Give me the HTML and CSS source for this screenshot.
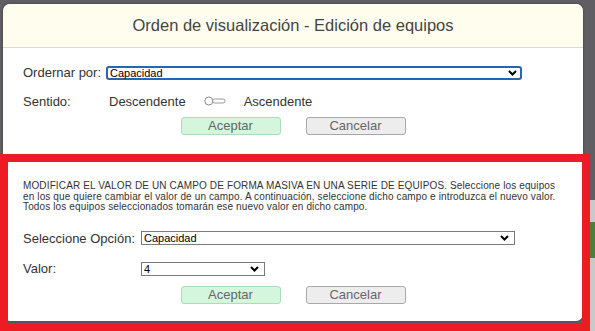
FILE: index.html
```html
<!DOCTYPE html>
<html lang="es">
<head>
<meta charset="utf-8">
<title>Orden de visualización - Edición de equipos</title>
<link rel="stylesheet" href="styles.css">
</head>
<body>
<div class="page-peek"><div class="peek-green"></div></div>
<div class="modal">
  <div class="modal-header">
    <h1 class="modal-title">Orden de visualización - Edición de equipos</h1>
  </div>
  <div class="section sort">
    <div class="row row-order">
      <span class="label label-order">Ordernar por:</span>
      <div class="select select-focused">
        <span class="select-text">Capacidad</span>
        <svg class="chevron" width="9" height="6" viewBox="0 0 9 6"><path d="M1 1 L4.5 4.5 L8 1" fill="none" stroke="#000" stroke-width="2"/></svg>
      </div>
    </div>
    <div class="row row-dir">
      <span class="label label-dir">Sentido:</span>
      <span class="opt">Descendente</span>
      <svg class="toggle" width="22" height="10" viewBox="0 0 22 10">
        <rect x="8.5" y="3" width="12.5" height="4" rx="2" fill="#fff" stroke="#9a9a9a" stroke-width="1"/>
        <circle cx="4.8" cy="5" r="4" fill="#fff" stroke="#8a8a8a" stroke-width="1"/>
      </svg>
      <span class="opt opt-asc">Ascendente</span>
    </div>
    <div class="actions">
      <button class="btn btn-ok">Aceptar</button>
      <button class="btn btn-cancel">Cancelar</button>
    </div>
  </div>
  <div class="section mass">
    <p class="intro">MODIFICAR EL VALOR DE UN CAMPO DE FORMA MASIVA EN UNA SERIE DE EQUIPOS. Seleccione los equipos<br>en los que quiere cambiar el valor de un campo. A continuación, seleccione dicho campo e introduzca el nuevo valor.<br>Todos los equipos seleccionados tomarán ese nuevo valor en dicho campo.</p>
    <div class="row row-field">
      <span class="label label-field">Seleccione Opción:</span>
      <div class="select select-wide">
        <span class="select-text">Capacidad</span>
        <svg class="chevron" width="9" height="6" viewBox="0 0 9 6"><path d="M1 1 L4.5 4.5 L8 1" fill="none" stroke="#000" stroke-width="2"/></svg>
      </div>
    </div>
    <div class="row row-value">
      <span class="label label-field">Valor:</span>
      <div class="select select-narrow">
        <span class="select-text">4</span>
        <svg class="chevron" width="9" height="6" viewBox="0 0 9 6"><path d="M1 1 L4.5 4.5 L8 1" fill="none" stroke="#000" stroke-width="2"/></svg>
      </div>
    </div>
    <div class="actions actions-mass">
      <button class="btn btn-ok">Aceptar</button>
      <button class="btn btn-cancel">Cancelar</button>
    </div>
  </div>
</div>
<div class="highlight"></div>
</body>
</html>
```
FILE: styles.css
```css
html, body {
  margin: 0;
}
body {
  position: relative;
  width: 595px;
  height: 331px;
  box-sizing: border-box;
  padding: 4px 0 0 3px;
  overflow: hidden;
  background: #5f5f63;
  font-family: "Liberation Sans", Arial, sans-serif;
  color: #333;
}
.modal {
  width: 580px;
  height: 317px;
  background: #fff;
  border-radius: 7px;
  overflow: hidden;
  box-shadow: 0 0 2px rgba(0, 0, 0, 0.5);
}
.modal-header {
  height: 43px;
  background: #fffeee;
  border-bottom: 1px solid #d9d9d9;
  display: flex;
  align-items: center;
  justify-content: center;
}
.modal-title {
  margin: 0;
  font-weight: normal;
  font-size: 16.5px;
  color: #444;
}
.section {
  padding: 0 20px;
}
.sort {
  padding-top: 17px;
}
.row {
  display: flex;
  align-items: center;
  font-size: 13px;
  color: #333;
}
.row-order {
  height: 15px;
}
.label-order {
  width: 83px;
}
.select {
  box-sizing: border-box;
  display: flex;
  align-items: center;
  justify-content: space-between;
  background: #fff;
  font-size: 11px;
  color: #000;
}
.select-focused {
  width: 416px;
  height: 14px;
  border: 2px solid #2a63b0;
  border-radius: 3px;
  padding: 0 3px 0 2px;
}
.select-wide {
  width: 374px;
  height: 14px;
  border: 1px solid #7a7a7a;
  padding: 0 5px 0 2px;
}
.select-narrow {
  width: 124px;
  height: 14px;
  border: 1px solid #7a7a7a;
  padding: 0 5px 0 2px;
}
.chevron {
  display: block;
}
.row-dir {
  margin-top: 13px;
  height: 16px;
}
.label-dir {
  width: 86px;
}
.toggle {
  display: block;
  margin-left: 18px;
}
.opt-asc {
  margin-left: 18px;
}
.actions {
  display: flex;
  justify-content: center;
  gap: 25px;
  margin-top: 8px;
}
.btn {
  box-sizing: border-box;
  width: 100px;
  height: 18px;
  padding: 0;
  font-family: inherit;
  font-size: 13px;
  line-height: 16px;
  color: #666;
  border-radius: 3px;
}
.btn-ok {
  background: #d3f6dc;
  border: 1px solid #acdcb8;
}
.btn-cancel {
  background: #ededed;
  border: 1px solid #a8a8a8;
}
.intro {
  margin: 46px 0 0;
  font-size: 10px;
  letter-spacing: 0.13px;
  line-height: 10.7px;
  white-space: nowrap;
  color: #333;
}
.row-field {
  margin-top: 18px;
  height: 14px;
}
.label-field {
  width: 118px;
}
.row-value {
  margin-top: 16px;
}
.actions-mass {
  margin-top: 10px;
}
.highlight {
  position: absolute;
  left: 0;
  top: 154px;
  width: 590px;
  height: 177px;
  box-sizing: border-box;
  border: 8px solid #ed1c24;
}
.page-peek {
  position: absolute;
  left: 590px;
  top: 200px;
  width: 5px;
  height: 131px;
  background: #c9c9c9;
}
.peek-green {
  margin-top: 22px;
  height: 36px;
  background: #4e7d3e;
}
```
